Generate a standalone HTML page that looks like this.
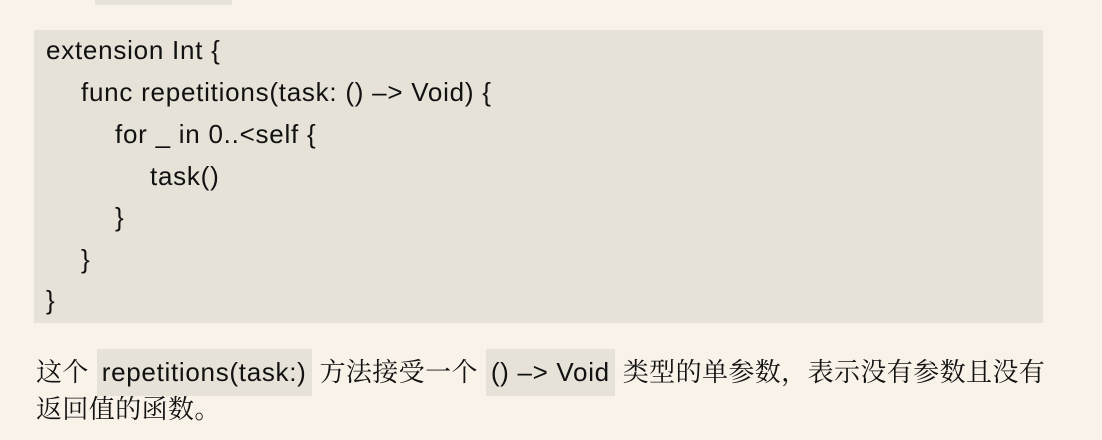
<!DOCTYPE html>
<html><head><meta charset="utf-8"><style>
html,body{margin:0;padding:0;}
body{width:1102px;height:440px;background:#f9f2e9;position:relative;overflow:hidden;font-family:"Liberation Sans","Noto Sans CJK SC",sans-serif;color:#111;}
.top{position:absolute;left:95px;top:0;width:137px;height:5px;background:#e7e2d8;}
.code{position:absolute;left:34px;top:30px;width:1009px;height:293px;background:#e7e2d8;}
.ln{position:absolute;left:12px;font-size:26px;letter-spacing:0.75px;line-height:42px;white-space:pre;}
.p{position:absolute;left:36px;font-size:26px;letter-spacing:0.7px;white-space:nowrap;line-height:36px;}
.cj{font-family:"Liberation Serif","Noto Serif CJK SC",serif;font-size:26px;letter-spacing:0.4px;}
.ic{background:#e7e2d8;padding:8px 5px 9px 5px;}
</style></head><body>
<div class="top"></div>
<div class="code">
<div class="ln" style="top:-1px">extension Int {</div>
<div class="ln" style="top:41px;left:47px">func repetitions(task: () –&gt; Void) {</div>
<div class="ln" style="top:83px;left:81px">for _ in 0..&lt;self {</div>
<div class="ln" style="top:125px;left:116px">task()</div>
<div class="ln" style="top:166px;left:81px">}</div>
<div class="ln" style="top:208px;left:47px">}</div>
<div class="ln" style="top:249px">}</div>
</div>
<div class="p" style="top:354px"><span class="cj">这个</span> <span class="ic">repetitions(task:)</span> <span class="cj">方法接受一个</span> <span class="ic">() –&gt; Void</span> <span class="cj">类型的单参数，表示没有参数且没有</span></div>
<div class="p" style="top:391px"><span class="cj">返回值的函数。</span></div>
</body></html>
